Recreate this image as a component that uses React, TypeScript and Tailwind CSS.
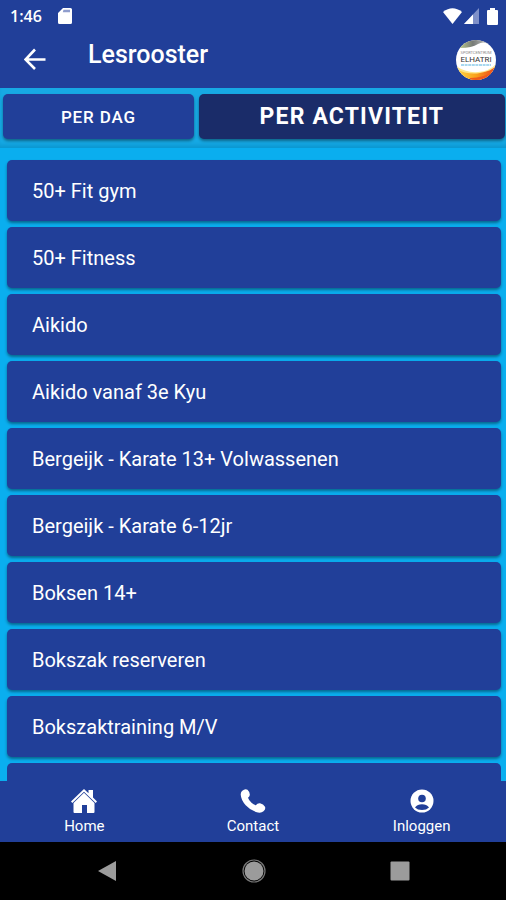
const activities = [
  "50+ Fit gym",
  "50+ Fitness",
  "Aikido",
  "Aikido vanaf 3e Kyu",
  "Bergeijk - Karate 13+ Volwassenen",
  "Bergeijk - Karate 6-12jr",
  "Boksen 14+",
  "Bokszak reserveren",
  "Bokszaktraining M/V",
];

function StatusBar() {
  return (
    <div className="flex h-8 items-center justify-between pr-2 pl-[10px]">
      <div className="flex items-center gap-4">
        <span className="font-['Open_Sans',sans-serif] text-base leading-6 font-semibold">1:46</span>
        <svg width="14" height="16" viewBox="0 0 14 16" aria-hidden="true">
          <path fill="#fff" d="M5 0h7.500A1.500 1.500 0 0 1 14 1.500v13a1.500 1.500 0 0 1-1.500 1.500h-11A1.500 1.500 0 0 1 0 14.500V5z" />
          <path fill="#8f9dcd" d="M5.500 1.800h6.500v2.400H4.800z" />
        </svg>
      </div>
      <div className="flex items-center">
        <svg width="19" height="16" viewBox="0 0 19 16" aria-hidden="true">
          <path fill="#fff" d="M0 4Q9.500-3.500 19 4L9.500 16z" />
        </svg>
        <svg className="ml-[2px]" width="15" height="16" viewBox="0 0 15 16" aria-hidden="true">
          <path fill="#7f90c9" d="M15 0v16H0z" />
          <path fill="#fff" d="M9 6.400V16H0z" />
        </svg>
        <svg className="ml-2" width="11" height="17" viewBox="0 0 11 17" aria-hidden="true">
          <path fill="#fff" d="M3 0h5v2h2q1 0 1 1v13q0 1-1 1H1q-1 0-1-1V3q0-1 1-1h2z" />
        </svg>
      </div>
    </div>
  );
}

function Logo() {
  return (
    <svg width="40" height="40" viewBox="0 0 40 40" role="img" aria-label="Sportcentrum Elhatri">
      <defs>
        <clipPath id="disc">
          <circle cx="20" cy="20" r="20" />
        </clipPath>
        <linearGradient id="flame" x1="0" x2="1">
          <stop offset="0" stopColor="#ffd84a" />
          <stop offset=".5" stopColor="#f9a21b" />
          <stop offset="1" stopColor="#e8401c" />
        </linearGradient>
        <linearGradient id="smoke" x1="0" x2="1">
          <stop offset="0" stopColor="#b9c78a" />
          <stop offset=".4" stopColor="#777b78" />
          <stop offset="1" stopColor="#d5d5d5" />
        </linearGradient>
      </defs>
      <g clipPath="url(#disc)">
        <path fill="#fff" d="M0 0h40v40H0z" />
        <path fill="url(#smoke)" d="M4 8Q16 8 22 4T36 6V0H4z" />
        <path fill="#fde68a" d="M0 26Q10 33 22 32T40 24V40H0z" />
        <path fill="url(#flame)" d="M0 29Q12 35 24 33T40 26V40H0z" />
        <path fill="#ee5a1d" d="M14 38Q28 38 38 31V40H14z" />
      </g>
      <text x="20" y="14" textAnchor="middle" fontFamily="Roboto, sans-serif" fontSize="4" fill="#888">SPORTCENTRUM</text>
      <text x="20" y="22" textAnchor="middle" fontFamily="Roboto, sans-serif" fontSize="8" fill="#333">ELHATRI</text>
      <path stroke="#8ccbea" strokeWidth="1.500" strokeDasharray="3 .6" d="M5 25h30" />
    </svg>
  );
}

function HomeIcon() {
  return (
    <svg width="26" height="24" viewBox="0 0 26 24" aria-hidden="true">
      <path fill="#fff" d="M13 0 17.500 4.300V1H22v7.600l4 3.900-1.300 1.400L13 2.700 1.300 13.900 0 12.500z" />
      <path fill="#fff" d="M13 3.700 23.500 14V23q0 1-1 1H16v-8h-5v8H3.500q-1 0-1-1v-9z" />
    </svg>
  );
}

function PhoneIcon() {
  return (
    <svg width="26" height="24" viewBox="0 0 26 24" aria-hidden="true">
      <path
        fill="#fff"
        d="M2 2Q5-.8 7.500.7Q10 3 9.800 6Q9.600 7.700 8 8.800Q8.800 11.400 11.500 13.700Q13.500 15.500 15.800 16.200Q17.500 14 20 14.300Q23.500 15.200 25 17.700Q26 20 23.500 22.300Q21.500 24.200 18 23.600Q11 22 5.700 16.200Q1 11 .7 5.500Q.7 3.300 2 2z"
      />
    </svg>
  );
}

function PersonIcon() {
  return (
    <svg width="24" height="24" viewBox="0 0 24 24" aria-hidden="true">
      <circle cx="12" cy="12" r="11.500" fill="#fff" />
      <circle cx="12" cy="9.500" r="3.800" fill="#213f99" />
      <path fill="#213f99" d="M5 18.500Q7.500 15.300 12 15.300T19 18.500Q16.500 21 12 21T5 18.500z" />
    </svg>
  );
}

const navItems = [
  { label: "Home", Icon: HomeIcon },
  { label: "Contact", Icon: PhoneIcon },
  { label: "Inloggen", Icon: PersonIcon },
];

export default function App() {
  return (
    <div className="flex h-screen flex-col overflow-hidden bg-[#0aaeef] font-[Roboto,sans-serif] text-white">
      <header className="bg-[#213f99]">
        <StatusBar />
        <div className="flex h-14 items-start pr-[10px] pl-6">
          <button type="button" aria-label="Terug" className="mt-4">
            <svg width="22" height="22" viewBox="0 0 22 22" fill="none" stroke="#fff" strokeWidth="2.600" aria-hidden="true">
              <path d="M21.500 11.500H2M11 1.500l-9.500 10 9.500 9.500" />
            </svg>
          </button>
          <h1 className="ml-[42px] flex-1 pt-2 text-[25px] leading-[30px] font-medium">Lesrooster</h1>
          <div className="mt-2">
            <Logo />
          </div>
        </div>
      </header>

      <div className="flex h-[60px] shrink-0 gap-[5px] bg-[#17a9e4] pt-[6px] pr-px pb-[9px] pl-[3px] shadow-[inset_0_-5px_4px_-2px_#0b97d1]">
        <button
          type="button"
          className="w-[38%] rounded-[5px] bg-[#213f99] text-[17px] leading-6 font-medium tracking-wider shadow-[0_2px_3px_rgba(0,0,0,0.4)]"
        >
          PER DAG
        </button>
        <button
          type="button"
          className="flex-1 rounded-[5px] bg-[#1a2c69] text-[23px] leading-6 font-bold tracking-wider shadow-[0_2px_3px_rgba(0,0,0,0.4)]"
        >
          PER ACTIVITEIT
        </button>
      </div>

      <main className="min-h-0 flex-1 overflow-hidden pt-3 pr-[5px] pl-[7px]">
        <ul className="flex flex-col gap-[6px]">
          {activities.map((name) => (
            <li key={name}>
              <button
                type="button"
                className="flex h-[61px] w-full items-center rounded-[5px] bg-[#213f99] pl-[25px] text-left text-[20px] leading-6 shadow-[0_2px_3px_rgba(0,0,0,0.4)]"
              >
                {name}
              </button>
            </li>
          ))}
          <li aria-hidden="true" className="h-[61px] rounded-[5px] bg-[#213f99]" />
        </ul>
      </main>

      <nav className="grid h-[61px] shrink-0 grid-cols-3 bg-[#213f99]">
        {navItems.map(({ label, Icon }) => (
          <button key={label} type="button" className="flex flex-col items-center pt-2">
            <Icon />
            <span className="mt-1 text-[15px] leading-[18px]">{label}</span>
          </button>
        ))}
      </nav>

      <div className="flex h-[58px] shrink-0 items-center justify-center gap-[124px] bg-black">
        <button type="button" aria-label="Vorige">
          <svg width="22" height="22" viewBox="0 0 22 22" aria-hidden="true">
            <path fill="#9b9b9b" d="M20 1v20L2 11z" />
          </svg>
        </button>
        <button type="button" aria-label="Startscherm">
          <svg width="24" height="24" viewBox="0 0 24 24" aria-hidden="true">
            <circle cx="12" cy="12" r="11" fill="none" stroke="#777" strokeWidth="1.200" />
            <circle cx="12" cy="12" r="9.500" fill="#9b9b9b" />
          </svg>
        </button>
        <button type="button" aria-label="Overzicht">
          <svg width="20" height="20" viewBox="0 0 20 20" aria-hidden="true">
            <rect width="19" height="19" x=".5" y=".5" rx="1" fill="#9b9b9b" />
          </svg>
        </button>
      </div>
    </div>
  );
}
